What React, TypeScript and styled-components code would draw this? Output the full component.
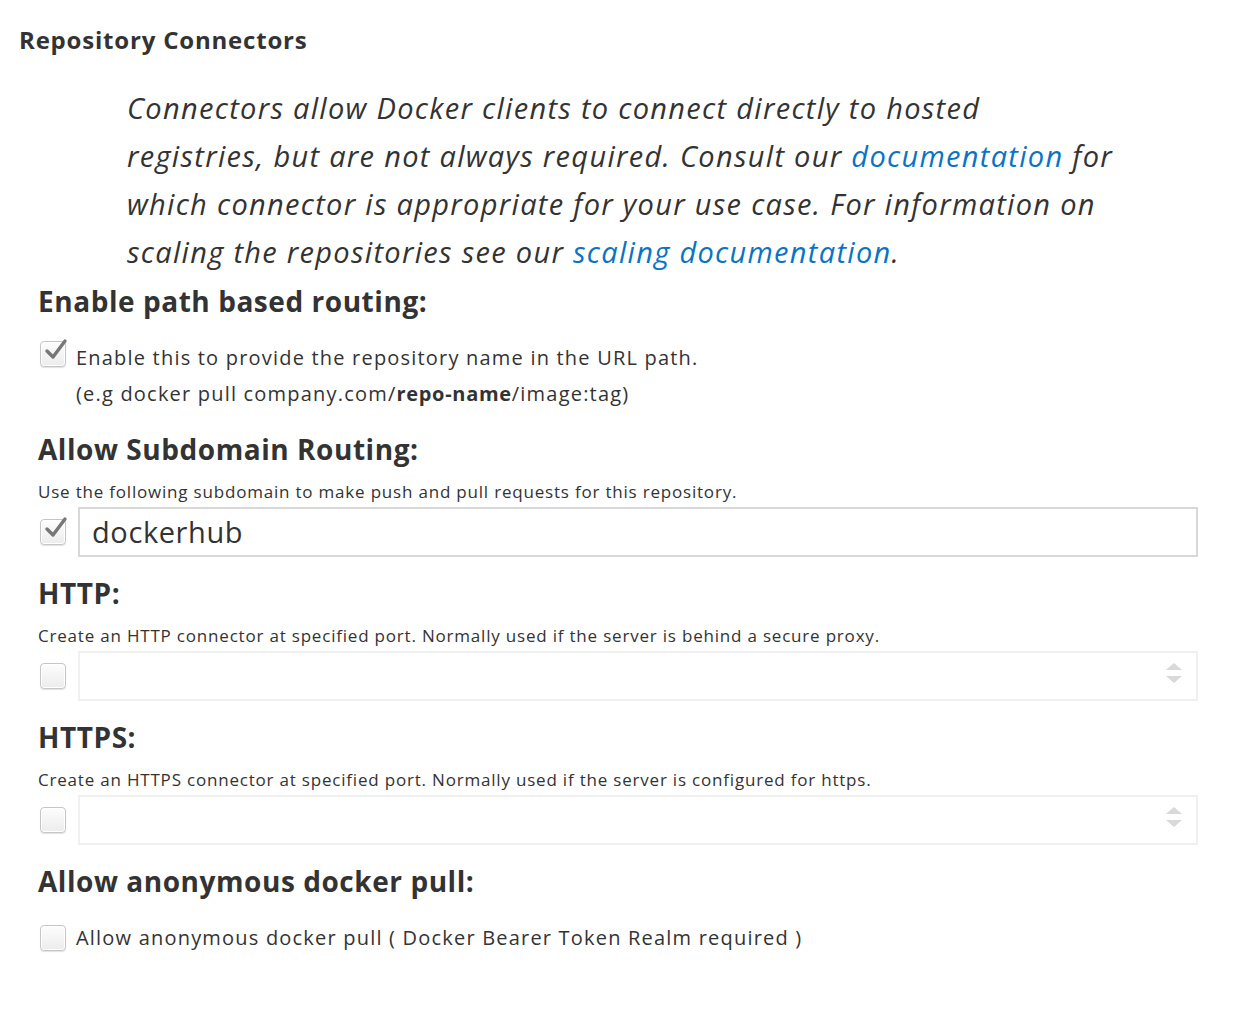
import styled, { createGlobalStyle } from "styled-components";

const Global = createGlobalStyle`
  body {
    margin: 0;
    background: #fff;
    font-family: "Open Sans", "Liberation Sans", sans-serif;
    color: #333;
  }
`;

const Page = styled.div`
  width: 1236px;
  padding: 24px 38px 0 38px;
  box-sizing: border-box;
`;

const Title = styled.h2`
  margin: 0 0 0 -19px;
  font-size: 24px;
  line-height: 32px;
  font-weight: 700;
  letter-spacing: 0.8px;
`;

const Quote = styled.p`
  margin: 28px 0 5px 89px;
  font-size: 29px;
  line-height: 48px;
  font-style: italic;
  letter-spacing: 1.3px;
  white-space: nowrap;
  color: #333;
`;

const Link = styled.a`
  color: #0a74c4;
  text-decoration: none;
`;

const Heading = styled.h3`
  margin: 0;
  font-size: 28px;
  line-height: 40px;
  font-weight: 700;
  letter-spacing: 0.55px;
  color: #333;
`;

const Desc = styled.div`
  font-size: 17px;
  line-height: 24px;
  letter-spacing: 0.8px;
  margin-top: 11px;
`;

const Row = styled.div`
  display: flex;
  align-items: center;
  gap: 12px;
  margin-top: 3px;
`;

const CheckRow = styled.div<{ $top: number; $center?: boolean }>`
  display: flex;
  align-items: ${(p) => (p.$center ? "center" : "flex-start")};
  gap: 10px;
  margin-top: ${(p) => p.$top}px;
  font-size: 20px;
  line-height: 36px;
  letter-spacing: 1.2px;
  b {
    letter-spacing: 0.7px;
  }
`;

const Box = styled.span<{ $lift?: number }>`
  flex: none;
  position: relative;
  width: 24px;
  height: 24px;
  margin: ${(p) => p.$lift ?? 0}px 0 0 2px;
  border: 1px solid #c6c6c6;
  border-radius: 4px;
  background: linear-gradient(#fdfdfd, #ececec);
  box-shadow: inset 0 0 0 1px #fff, 0 1px 1px rgba(0, 0, 0, 0.12);
  svg {
    position: absolute;
    left: 3px;
    top: -4px;
  }
`;

const Input = styled.div<{ $muted?: boolean }>`
  flex: 1;
  position: relative;
  height: 50px;
  box-sizing: border-box;
  border: 2px solid ${(p) => (p.$muted ? "#f0f0f0" : "#d8d8d8")};
  padding: 0 12px;
  font-size: 29px;
  line-height: 46px;
  letter-spacing: 0.6px;
  color: #333;
`;

const Spin = styled.span`
  position: absolute;
  right: 14px;
  top: 10px;
  display: flex;
  flex-direction: column;
  gap: 6px;
  &::before,
  &::after {
    content: "";
    border-left: 8px solid transparent;
    border-right: 8px solid transparent;
  }
  &::before {
    border-bottom: 7px solid #d9d9d9;
  }
  &::after {
    border-top: 7px solid #d9d9d9;
  }
`;

const Section = styled.div<{ $top: number }>`
  margin-top: ${(p) => p.$top}px;
`;

function Check({ on, lift }: { on?: boolean; lift?: number }) {
  return (
    <Box $lift={lift}>
      {on && (
        <svg width="24" height="24" viewBox="0 0 24 24">
          <path d="M3 13 L9 19 L21 3" fill="none" stroke="#777" strokeWidth="3.4" strokeLinecap="round" strokeLinejoin="round" />
        </svg>
      )}
    </Box>
  );
}

export default function App() {
  return (
    <>
      <Global />
      <Page>
        <Title>Repository Connectors</Title>
        <Quote>
          Connectors allow Docker clients to connect directly to hosted
          <br />
          registries, but are not always required. Consult our <Link href="#">documentation</Link> for
          <br />
          which connector is appropriate for your use case. For information on
          <br />
          scaling the repositories see our <Link href="#">scaling documentation</Link>.
        </Quote>

        <Heading>Enable path based routing:</Heading>
        <CheckRow $top={19}>
          <Check on lift={1} />
          <div>
            Enable this to provide the repository name in the URL path.
            <br />
            (e.g docker pull company.com/<b>repo-name</b>/image:tag)
          </div>
        </CheckRow>

        <Section $top={17}>
          <Heading>Allow Subdomain Routing:</Heading>
          <Desc>Use the following subdomain to make push and pull requests for this repository.</Desc>
          <Row>
            <Check on />
            <Input>dockerhub</Input>
          </Row>
        </Section>

        <Section $top={16}>
          <Heading>HTTP:</Heading>
          <Desc>Create an HTTP connector at specified port. Normally used if the server is behind a secure proxy.</Desc>
          <Row>
            <Check />
            <Input $muted>
              <Spin />
            </Input>
          </Row>
        </Section>

        <Section $top={16}>
          <Heading>HTTPS:</Heading>
          <Desc>Create an HTTPS connector at specified port. Normally used if the server is configured for https.</Desc>
          <Row>
            <Check />
            <Input $muted>
              <Spin />
            </Input>
          </Row>
        </Section>

        <Section $top={16}>
          <Heading>Allow anonymous docker pull:</Heading>
          <CheckRow $top={19} $center>
            <Check />
            <div>Allow anonymous docker pull ( Docker Bearer Token Realm required )</div>
          </CheckRow>
        </Section>
      </Page>
    </>
  );
}
